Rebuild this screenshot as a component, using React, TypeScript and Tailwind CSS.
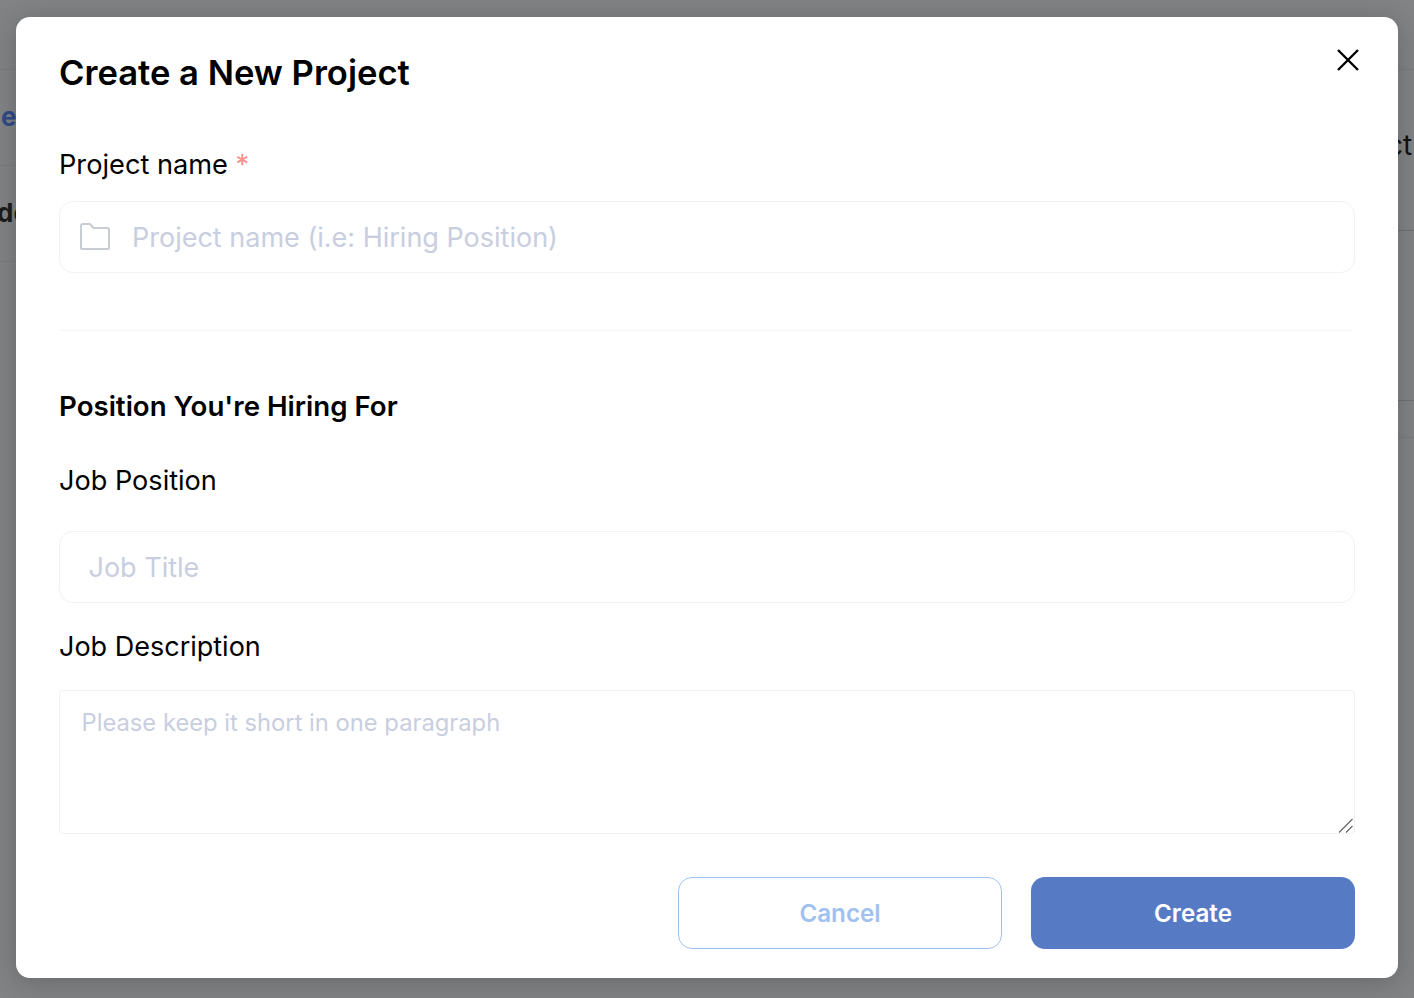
export default function App() {
  const font = { fontFamily: "Inter, 'Liberation Sans', sans-serif" };
  return (
    <div style={font} className="relative h-[998px] w-[1414px] overflow-hidden bg-[#828385]">
      {/* dimmed page behind the dialog */}
      <div className="absolute left-0 top-[69px] h-px w-4 bg-[#7a7b7d]" />
      <div className="absolute left-0 top-[165px] h-px w-4 bg-[#7a7b7d]" />
      <div className="absolute left-0 top-[261px] h-px w-4 bg-[#7a7b7d]" />
      <div className="absolute left-[1px] top-[101px] text-[26px] font-bold leading-8 text-[#314a8a]">e</div>
      <div className="absolute left-[-3px] top-[197px] text-[26px] font-bold leading-8 text-[#1c1c1c]">de</div>
      <div className="absolute right-0 top-[69px] h-px w-4 bg-[#7a7b7d]" />
      <div className="absolute right-0 top-[230px] h-px w-4 bg-[#6f7072]" />
      <div className="absolute right-0 top-[400px] h-px w-4 bg-[#6f7072]" />
      <div className="absolute right-0 top-[437px] h-px w-4 bg-[#7a7b7d]" />
      <div className="absolute left-[1387px] top-[129px] text-[28px] leading-8 text-[#111]">ct</div>

      <div className="absolute left-4 top-[17px] flex h-[961px] w-[1382px] flex-col rounded-[14px] bg-white pb-[29px] pl-[43px] pr-[43px] pt-[34px] shadow-[0_4px_28px_rgba(0,0,0,0.22)]">
        <div className="flex items-start justify-between">
          <h1 className="text-[34.6px] font-semibold leading-[42px] text-black">Create a New Project</h1>
          <button className="mr-[-6px] mt-[-4px] text-black" aria-label="Close">
            <svg width="26" height="26" viewBox="0 0 26 26" fill="none" stroke="currentColor" strokeWidth="2.4">
              <path d="M3 3 L23 23 M23 3 L3 23" />
            </svg>
          </button>
        </div>

        <label className="mt-[55px] text-[27.2px] leading-[34px] text-black">
          Project name <span className="text-[#fb8c8c]">*</span>
        </label>
        <div className="mt-[19px] flex h-[72px] items-center gap-[21px] rounded-[14px] border border-[#f1f1f7] pl-[19px]">
          <svg width="32" height="28" viewBox="0 0 32 28" fill="none" stroke="#c9ccd3" strokeWidth="2" strokeLinejoin="round">
            <path d="M2 25 V3 a2 2 0 0 1 2-2 H11 l3.5 4 H28 a2 2 0 0 1 2 2 V25 a1 1 0 0 1-1 1 H3 a1 1 0 0 1-1-1 Z" />
          </svg>
          <input
            placeholder="Project name (i.e: Hiring Position)"
            className="h-full min-w-0 flex-1 bg-transparent text-[27px] outline-none placeholder:text-[#c8cee0]"
          />
        </div>

        <div className="mt-[57px] mr-[2px] h-px bg-[#f6f6f9]" />

        <h2 className="mt-[58px] text-[27.65px] font-semibold leading-[34px] text-black">Position You're Hiring For</h2>

        <label className="mt-[41px] text-[27.1px] leading-[34px] text-black">Job Position</label>
        <input
          placeholder="Job Title"
          className="mt-[33px] h-[72px] rounded-[14px] border border-[#f1f1f7] pl-[28.5px] text-[27px] outline-none placeholder:text-[#c8cee0]"
        />

        <label className="mt-[27px] text-[27px] leading-[34px] text-black">Job Description</label>
        <div className="relative mt-[26px] flex h-[144px]">
          <textarea
            placeholder="Please keep it short in one paragraph"
            className="flex-1 resize-none rounded-[4px] border border-[#f1f1f7] px-[21.5px] py-[16px] text-[23.75px] leading-[32px] outline-none placeholder:text-[#c8cee0]"
          />
          <svg className="absolute bottom-0 right-0" width="18" height="18" viewBox="0 0 18 18" fill="none" stroke="#666" strokeWidth="1.2">
            <path d="M2 16.5 L15.5 3 M9 16.5 L15.5 10" />
          </svg>
        </div>

        <div className="mt-[43px] flex justify-end gap-[29px]">
          <button className="h-[72px] w-[324px] rounded-[14px] border border-[#9fc1f0] bg-white pt-[2px] text-[24.2px] font-semibold text-[#9fc1f0]">Cancel</button>
          <button className="h-[72px] w-[324px] rounded-[14px] bg-[#567bc4] pt-[2px] text-[24.2px] font-semibold text-white">Create</button>
        </div>
      </div>
    </div>
  );
}
